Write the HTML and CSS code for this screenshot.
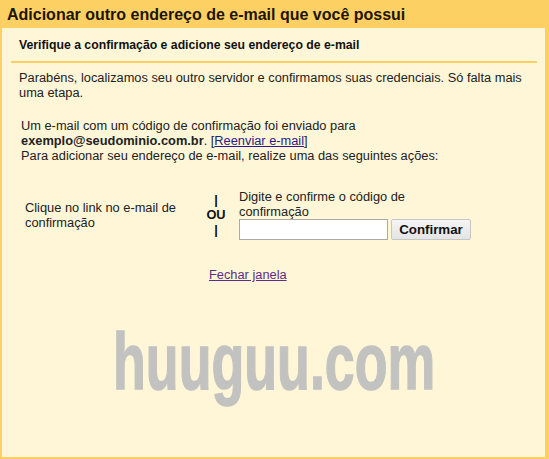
FILE: index.html

```html
<!DOCTYPE html>
<html lang="pt-BR">
<head>
    <meta charset="UTF-8">
    <meta name="viewport" content="width=device-width, initial-scale=1.0">
    <title>Adicionar outro endereço de e-mail</title>
    <link rel="stylesheet" href="styles.css">
</head>
<body>
    <div class="dialog">
        <h1 class="dialog-title">Adicionar outro endereço de e-mail que você possui</h1>
        <div class="panel">
            <h2 class="panel-title">Verifique a confirmação e adicione seu endereço de e-mail</h2>
            <p class="intro">Parabéns, localizamos seu outro servidor e confirmamos suas credenciais. Só falta mais uma etapa.</p>
            <p class="info">
                Um e-mail com um código de confirmação foi enviado para<br>
                <strong>exemplo@seudominio.com.br</strong>. [<a class="resend" href="#">Reenviar e-mail</a>]<br>
                Para adicionar seu endereço de e-mail, realize uma das seguintes ações:
            </p>
            <div class="options">
                <div class="option-link">Clique no link no e-mail de confirmação</div>
                <div class="option-or">|<br>OU<br>|</div>
                <div class="option-code">
                    <label for="code">Digite e confirme o código de confirmação</label>
                    <div class="code-row">
                        <input type="text" id="code" class="code-input">
                        <button type="button" class="confirm">Confirmar</button>
                    </div>
                </div>
            </div>
            <a class="close" href="#">Fechar janela</a>
            <div class="watermark">huuguu.com</div>
        </div>
    </div>
</body>
</html>
```

FILE: styles.css

```css
body {
    margin: 0;
    font-family: "Liberation Sans", Arial, sans-serif;
    font-size: 12.82px;
    line-height: 15px;
    color: #222;
}
.dialog {
    width: 549px;
    height: 459px;
    box-sizing: border-box;
    display: flex;
    flex-direction: column;
    padding: 0 4px 2px 2px;
    background: #fdd064;
}
.dialog-title {
    margin: 0;
    height: 28px;
    padding: 0 0 0 5px;
    font-size: 16px;
    line-height: 30px;
    font-weight: bold;
    color: #1d1505;
}
.panel {
    position: relative;
    flex: 1;
    padding: 0 8px 0 9px;
    background: #fff6d8;
}
.panel-title {
    margin: 0;
    padding: 10px 0 8px 8px;
    font-size: 12.25px;
    line-height: 15px;
    font-weight: bold;
    color: #111;
    border-bottom: 2px solid #fdd064;
}
.intro {
    margin: 0;
    padding: 7px 0 0 8px;
}
.info {
    margin: 18px 0 0;
    padding-left: 10px;
}
.resend {
    color: #2a1a8c;
}
.options {
    display: flex;
    align-items: center;
    margin-top: 26px;
}
.option-link {
    width: 156px;
    margin-left: 14px;
}
.option-or {
    width: 30px;
    margin-left: 20px;
    text-align: center;
    font-weight: bold;
    color: #111;
}
.option-code {
    width: 232px;
    margin-left: 8px;
}
.code-row {
    display: flex;
    gap: 3px;
}
.code-input {
    width: 149px;
    height: 21px;
    box-sizing: border-box;
    margin: 0;
    padding: 0 3px;
    border: 1px solid #aaa;
    background: #fff;
}
.confirm {
    width: 80px;
    height: 21px;
    padding: 0;
    font: bold 13.3px "Liberation Sans", Arial, sans-serif;
    color: #111;
    border: 1px solid #c6c6c6;
    border-radius: 2px;
    background: linear-gradient(#f5f5f5, #e4e4e4);
}
.close {
    display: block;
    width: max-content;
    margin: 27px 0 0 198px;
    color: #5a2f86;
}
.watermark {
    position: absolute;
    left: 111px;
    top: 294px;
    font-size: 79px;
    line-height: 80px;
    font-weight: bold;
    color: #c2c2c0;
    -webkit-text-stroke: 1.5px #c2c2c0;
    transform: scaleX(0.68);
    transform-origin: left top;
    white-space: nowrap;
}
```
